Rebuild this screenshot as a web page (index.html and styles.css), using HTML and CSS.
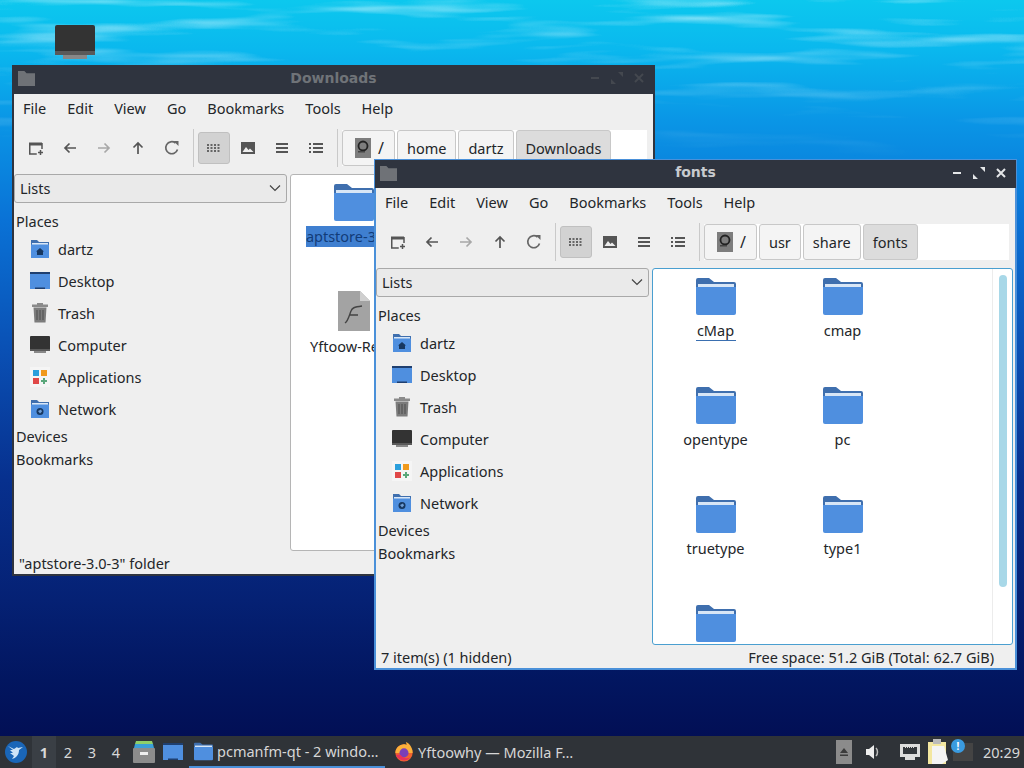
FILE: index.html
```html
<!DOCTYPE html>
<html lang="en">
<head>
    <meta charset="UTF-8">
    <title>pcmanfm-qt</title>
    <link rel="stylesheet" href="styles.css">
</head>
<body>
    <svg class="defs" width="0" height="0">
        <filter id="f-clouds" x="0" y="0" width="100%" height="100%">
            <feTurbulence type="fractalNoise" baseFrequency="0.005 0.06" numOctaves="3" seed="7"/>
            <feColorMatrix type="matrix" values="0 0 0 0 0.8  0 0 0 0 0.96  0 0 0 0 1  2.4 0 0 0 -1.25"/>
        </filter>
        <linearGradient id="g-fade" x1="0" y1="0" x2="0" y2="1">
            <stop offset="0" stop-color="#ccc"/>
            <stop offset="0.5" stop-color="#777"/>
            <stop offset="1" stop-color="#000"/>
        </linearGradient>
        <mask id="m-fade"><rect width="1024" height="160" fill="url(#g-fade)"/></mask>
        <symbol id="i-folder" viewBox="0 0 40 37">
            <path d="M2 0h11l5 4h20a2 2 0 0 1 2 2v8H0V2a2 2 0 0 1 2-2z" fill="#3f6fae"/>
            <rect x="2" y="6" width="36" height="6" fill="#d8e6f6"/>
            <path d="M0 9h40v26a2 2 0 0 1-2 2H2a2 2 0 0 1-2-2z" fill="#4f8fdf"/>
        </symbol>
        <symbol id="i-home" viewBox="0 0 20 20">
            <path d="M1 1h6l2 2h10v4H1z" fill="#3f6fae"/>
            <rect x="2" y="4" width="16" height="2" fill="#d8e6f6"/>
            <rect x="1" y="5.500" width="18" height="13.500" fill="#4f8fdf"/>
            <path d="M10 9l4 3.500h-1V16H7v-3.500H6z" fill="#17375f"/>
        </symbol>
        <symbol id="i-network" viewBox="0 0 20 20">
            <path d="M1 1h6l2 2h10v4H1z" fill="#3f6fae"/>
            <rect x="2" y="4" width="16" height="2" fill="#d8e6f6"/>
            <rect x="1" y="5.500" width="18" height="13.500" fill="#4f8fdf"/>
            <circle cx="10" cy="12.500" r="3.500" fill="#17375f"/>
            <path d="M8 12l3-1.500 1 2-2 2z" fill="#6f9ed6"/>
        </symbol>
        <symbol id="i-desktop" viewBox="0 0 20 20">
            <rect x="0" y="1" width="20" height="17" fill="#4f8fdf"/>
            <rect x="0" y="1" width="20" height="2" fill="#1f3f6f"/>
            <rect x="5" y="16.500" width="10" height="1.500" fill="#1f3f6f"/>
        </symbol>
        <symbol id="i-trash" viewBox="0 0 20 20">
            <path d="M7 0h6v1.500h5V4H2V1.500h5z" fill="#8a8a8a"/>
            <path d="M3.500 4.500h13l-1 15h-11z" fill="#7c7c7c"/>
            <path d="M7 7v10M10 7v10M13 7v10" stroke="#5c5c5c" stroke-width="1.500"/>
        </symbol>
        <symbol id="i-computer" viewBox="0 0 20 20">
            <rect x="0" y="1" width="20" height="15" rx="1" fill="#333"/>
            <rect x="0" y="14" width="20" height="2" fill="#5a5a5a"/>
            <rect x="4" y="16" width="12" height="2" fill="#888"/>
        </symbol>
        <symbol id="i-apps" viewBox="0 0 20 20">
            <rect x="0" y="0" width="20" height="20" fill="#f5f5f5"/>
            <rect x="3" y="3" width="6" height="6" fill="#2b9fdc"/>
            <rect x="11" y="3" width="6" height="6" fill="#f09a1d"/>
            <rect x="3" y="11" width="6" height="6" fill="#e04848"/>
            <path d="M14 11v6M11 14h6" stroke="#5aa77a" stroke-width="2"/>
        </symbol>
        <symbol id="i-newwin" viewBox="0 0 16 16">
            <path d="M1 2.500h13v3H1z" fill="#555"/>
            <path d="M1.750 3v11h7M14 3v6" fill="none" stroke="#555" stroke-width="1.500"/>
            <path d="M12.500 10v5M10 12.500h5" stroke="#555" stroke-width="1.500"/>
        </symbol>
        <symbol id="i-back" viewBox="0 0 16 16">
            <path d="M14 8H3M7.500 3.500L3 8l4.500 4.500" fill="none" stroke="currentColor" stroke-width="1.700"/>
        </symbol>
        <symbol id="i-up" viewBox="0 0 16 16">
            <path d="M8 14V3M3.500 7.500L8 3l4.500 4.500" fill="none" stroke="currentColor" stroke-width="1.700"/>
        </symbol>
        <symbol id="i-reload" viewBox="0 0 16 16">
            <path d="M13.500 9.500A6 6 0 1 1 11.500 3" fill="none" stroke="#666" stroke-width="1.700"/>
            <path d="M9.500 1h5v5z" fill="#666"/>
        </symbol>
        <symbol id="i-grid" viewBox="0 0 16 16">
            <path d="M1 4h2v2H1zM4.500 4h2v2h-2zM8 4h2v2H8zM11.500 4h2v2h-2zM1 7h2v2H1zM4.500 7h2v2h-2zM8 7h2v2H8zM11.500 7h2v2h-2zM1 10h2v2H1zM4.500 10h2v2h-2zM8 10h2v2H8zM11.500 10h2v2h-2z" fill="#666"/>
        </symbol>
        <symbol id="i-thumb" viewBox="0 0 16 16">
            <path d="M1 2h14v12H1z" fill="#555"/>
            <path d="M2.500 12l3.500-5 2.500 3 1.500-1.500 3.500 3.500z" fill="#eee"/>
        </symbol>
        <symbol id="i-compact" viewBox="0 0 16 16">
            <path d="M2 3h12v2H2zM2 7h12v2H2zM2 11h12v2H2z" fill="#555"/>
        </symbol>
        <symbol id="i-detail" viewBox="0 0 16 16">
            <path d="M1 3h2v2H1zM5 3h10v2H5zM1 7h2v2H1zM5 7h10v2H5zM1 11h2v2H1zM5 11h10v2H5z" fill="#555"/>
        </symbol>
        <symbol id="i-root" viewBox="0 0 16 20">
            <rect width="16" height="20" fill="#7d7d7d"/>
            <circle cx="8" cy="8" r="4.500" fill="none" stroke="#222" stroke-width="1.800"/>
            <rect x="3" y="13" width="7" height="1.500" fill="#444"/>
        </symbol>
        <symbol id="i-tfolder" viewBox="0 0 16 16">
            <path d="M0 1h6l2 2h8v12H0z" fill="#6f7277"/>
        </symbol>
    </svg>

    <div class="desktop">
        <svg class="clouds" width="1024" height="160"><g mask="url(#m-fade)"><rect width="1024" height="160" filter="url(#f-clouds)"/></g></svg>
        <svg class="desk-icon" width="40" height="40"><use href="#i-computer"/></svg>

        <section class="window window-back">
            <header class="titlebar">
                <svg class="title-icon" width="17" height="17"><use href="#i-tfolder"/></svg>
                <span class="title-text">Downloads</span>
                <div class="title-btns">
                    <svg width="14" height="14" viewBox="0 0 14 14"><path d="M3 7h8" stroke="currentColor" stroke-width="2"/></svg>
                    <svg width="14" height="14" viewBox="0 0 14 14"><path d="M8 1h5v5zM1 8l5 5H1z" fill="currentColor"/></svg>
                    <svg width="14" height="14" viewBox="0 0 14 14"><path d="M3 3l8 8M11 3l-8 8" stroke="currentColor" stroke-width="2"/></svg>
                </div>
            </header>
            <nav class="menubar">
                <span>File</span><span>Edit</span><span>View</span><span>Go</span><span>Bookmarks</span><span>Tools</span><span>Help</span>
            </nav>
            <div class="toolbar">
                <div class="tool"><svg width="16" height="16"><use href="#i-newwin"/></svg></div>
                <div class="tool"><svg width="16" height="16" class="ic-on"><use href="#i-back"/></svg></div>
                <div class="tool"><svg width="16" height="16" class="ic-off flip"><use href="#i-back"/></svg></div>
                <div class="tool"><svg width="16" height="16" class="ic-on"><use href="#i-up"/></svg></div>
                <div class="tool"><svg width="16" height="16"><use href="#i-reload"/></svg></div>
                <div class="tool-sep"></div>
                <div class="tool tool-active"><svg width="16" height="16"><use href="#i-grid"/></svg></div>
                <div class="tool"><svg width="16" height="16"><use href="#i-thumb"/></svg></div>
                <div class="tool"><svg width="16" height="16"><use href="#i-compact"/></svg></div>
                <div class="tool"><svg width="16" height="16"><use href="#i-detail"/></svg></div>
                <div class="tool-sep sep-path"></div>
                <div class="pathbar">
                    <div class="crumb crumb-root"><svg width="16" height="20"><use href="#i-root"/></svg><span>/</span></div>
                    <div class="crumb">home</div>
                    <div class="crumb">dartz</div>
                    <div class="crumb crumb-on">Downloads</div>
                </div>
            </div>
            <div class="main">
                <aside class="side">
                    <div class="combo"><span>Lists</span><svg width="12" height="8" viewBox="0 0 12 8"><path d="M1 1.500l5 5 5-5" fill="none" stroke="#444" stroke-width="1.200"/></svg></div>
                    <div class="side-head side-places">Places</div>
                    <div class="place"><svg width="20" height="20"><use href="#i-home"/></svg>dartz</div>
                    <div class="place"><svg width="20" height="20"><use href="#i-desktop"/></svg>Desktop</div>
                    <div class="place"><svg width="20" height="20"><use href="#i-trash"/></svg>Trash</div>
                    <div class="place"><svg width="20" height="20"><use href="#i-computer"/></svg>Computer</div>
                    <div class="place"><svg width="20" height="20"><use href="#i-apps"/></svg>Applications</div>
                    <div class="place"><svg width="20" height="20"><use href="#i-network"/></svg>Network</div>
                    <div class="side-head">Devices</div>
                    <div class="side-head">Bookmarks</div>
                </aside>
                <div class="view">
                    <div class="files">
                        <div class="file"><svg width="40" height="37"><use href="#i-folder"/></svg><span class="label label-sel">aptstore-3.0-3</span></div>
                        <div class="file"></div>
                        <div class="file">
                            <svg class="font-icon" width="32" height="40" viewBox="0 0 32 40">
                                <path d="M0 0h22l10 10v30H0z" fill="#a3a3a3"/>
                                <path d="M22 0l10 10H22z" fill="#cfcfcf"/>
                                <path d="M7 32c3-2 4-7 6-12 1-3 3-4 11-5M11 24h9" fill="none" stroke="#444" stroke-width="1.400"/>
                            </svg>
                            <span class="label">Yftoow-Regu</span>
                        </div>
                    </div>
                </div>
            </div>
            <footer class="status"><span>"aptstore-3.0-3" folder</span></footer>
        </section>

        <section class="window window-front">
            <header class="titlebar">
                <svg class="title-icon" width="17" height="17"><use href="#i-tfolder"/></svg>
                <span class="title-text">fonts</span>
                <div class="title-btns">
                    <svg width="14" height="14" viewBox="0 0 14 14"><path d="M3 7h8" stroke="currentColor" stroke-width="2"/></svg>
                    <svg width="14" height="14" viewBox="0 0 14 14"><path d="M8 1h5v5zM1 8l5 5H1z" fill="currentColor"/></svg>
                    <svg width="14" height="14" viewBox="0 0 14 14"><path d="M3 3l8 8M11 3l-8 8" stroke="currentColor" stroke-width="2"/></svg>
                </div>
            </header>
            <nav class="menubar">
                <span>File</span><span>Edit</span><span>View</span><span>Go</span><span>Bookmarks</span><span>Tools</span><span>Help</span>
            </nav>
            <div class="toolbar">
                <div class="tool"><svg width="16" height="16"><use href="#i-newwin"/></svg></div>
                <div class="tool"><svg width="16" height="16" class="ic-on"><use href="#i-back"/></svg></div>
                <div class="tool"><svg width="16" height="16" class="ic-off flip"><use href="#i-back"/></svg></div>
                <div class="tool"><svg width="16" height="16" class="ic-on"><use href="#i-up"/></svg></div>
                <div class="tool"><svg width="16" height="16"><use href="#i-reload"/></svg></div>
                <div class="tool-sep"></div>
                <div class="tool tool-active"><svg width="16" height="16"><use href="#i-grid"/></svg></div>
                <div class="tool"><svg width="16" height="16"><use href="#i-thumb"/></svg></div>
                <div class="tool"><svg width="16" height="16"><use href="#i-compact"/></svg></div>
                <div class="tool"><svg width="16" height="16"><use href="#i-detail"/></svg></div>
                <div class="tool-sep sep-path"></div>
                <div class="pathbar">
                    <div class="crumb crumb-root"><svg width="16" height="20"><use href="#i-root"/></svg><span>/</span></div>
                    <div class="crumb">usr</div>
                    <div class="crumb">share</div>
                    <div class="crumb crumb-on">fonts</div>
                </div>
            </div>
            <div class="main">
                <aside class="side">
                    <div class="combo"><span>Lists</span><svg width="12" height="8" viewBox="0 0 12 8"><path d="M1 1.500l5 5 5-5" fill="none" stroke="#444" stroke-width="1.200"/></svg></div>
                    <div class="side-head side-places">Places</div>
                    <div class="place"><svg width="20" height="20"><use href="#i-home"/></svg>dartz</div>
                    <div class="place"><svg width="20" height="20"><use href="#i-desktop"/></svg>Desktop</div>
                    <div class="place"><svg width="20" height="20"><use href="#i-trash"/></svg>Trash</div>
                    <div class="place"><svg width="20" height="20"><use href="#i-computer"/></svg>Computer</div>
                    <div class="place"><svg width="20" height="20"><use href="#i-apps"/></svg>Applications</div>
                    <div class="place"><svg width="20" height="20"><use href="#i-network"/></svg>Network</div>
                    <div class="side-head">Devices</div>
                    <div class="side-head">Bookmarks</div>
                </aside>
                <div class="view view-on">
                    <div class="files">
                        <div class="file"><svg width="40" height="37"><use href="#i-folder"/></svg><span class="label label-cur">cMap</span></div>
                        <div class="file"><svg width="40" height="37"><use href="#i-folder"/></svg><span class="label">cmap</span></div>
                        <div class="file"><svg width="40" height="37"><use href="#i-folder"/></svg><span class="label">opentype</span></div>
                        <div class="file"><svg width="40" height="37"><use href="#i-folder"/></svg><span class="label">pc</span></div>
                        <div class="file"><svg width="40" height="37"><use href="#i-folder"/></svg><span class="label">truetype</span></div>
                        <div class="file"><svg width="40" height="37"><use href="#i-folder"/></svg><span class="label">type1</span></div>
                        <div class="file"><svg width="40" height="37"><use href="#i-folder"/></svg></div>
                    </div>
                    <div class="scroll"><div class="scroll-thumb"></div></div>
                </div>
            </div>
            <footer class="status"><span>7 item(s) (1 hidden)</span><span>Free space: 51.2 GiB (Total: 62.7 GiB)</span></footer>
        </section>
    </div>

    <div class="panel">
        <svg class="start" width="32" height="32" viewBox="0 0 32 32">
            <circle cx="16" cy="16" r="11" fill="#1a66b8"/>
            <path d="M8 10l6 3 3-2 1 1 5-1-4 3c0 5-3 8-7 9l2-3-4-3 3 0-3-3 3 0z" fill="#cfe4f7"/>
        </svg>
        <div class="pager">
            <span class="desk-on">1</span><span>2</span><span>3</span><span>4</span>
        </div>
        <svg class="launch" width="22" height="24" viewBox="0 0 22 24">
            <path d="M3 1h16l1 3H2z" fill="#8fcf6a"/>
            <path d="M2 4h18l1 4H1z" fill="#3b9fd8"/>
            <rect x="0" y="8" width="22" height="15" rx="1" fill="#8c8c8c"/>
            <rect x="7" y="12" width="8" height="3" fill="#eee"/>
        </svg>
        <svg class="launch launch-desk" width="20" height="20"><use href="#i-desktop"/></svg>
        <div class="task task-on">
            <svg width="19" height="19"><use href="#i-folder"/></svg>
            <span>pcmanfm-qt - 2 windo…</span>
        </div>
        <div class="task task-fx">
            <svg width="20" height="22" viewBox="0 0 22 22">
                <circle cx="11" cy="12" r="9.500" fill="#f2622e"/>
                <path d="M1.500 12A9.500 9.500 0 0 1 14 3l-1-3c5 2 7.500 7 7.500 12z" fill="#fbb03b"/>
                <circle cx="11" cy="12" r="5" fill="#7a3fb8"/>
                <path d="M2 14c2 6 11 9 16 3-5 2-9 0-11-3z" fill="#e8325a"/>
            </svg>
            <span>Yftoowhy — Mozilla F…</span>
        </div>
        <div class="tray">
            <div class="tray-eject"><svg width="10" height="10" viewBox="0 0 10 10"><path d="M5 1l4 5H1zM1 7.500h8V9H1z" fill="#3c3c3c"/></svg></div>
            <svg class="tray-vol" width="18" height="18" viewBox="0 0 18 18"><path d="M2 6h3l5-4v14l-5-4H2z" fill="#eee"/><path d="M12 5c2 2 2 6 0 8" fill="none" stroke="#bbb" stroke-width="1.500"/></svg>
            <svg class="tray-net" width="22" height="20" viewBox="0 0 22 20"><path d="M1 2h20v13h-5v3H6v-3H1z" fill="#ddd"/><rect x="4" y="5" width="14" height="7" fill="#33373c"/><path d="M6 5.500h10" stroke="#ddd" stroke-dasharray="1 1"/></svg>
            <svg class="tray-clip" width="20" height="26" viewBox="0 0 20 26"><rect x="0" y="3" width="18" height="22" fill="#f3e7a0"/><path d="M4 7h12l4 14-6 4H4z" fill="#f4f4f4"/><rect x="5" y="0" width="8" height="5" fill="#bbb"/></svg>
            <div class="tray-note"><span class="note-dot">!</span></div>
            <span class="clock">20:29</span>
        </div>
    </div>
</body>
</html>
```

FILE: styles.css
```css
* {
    box-sizing: border-box;
}
html, body {
    margin: 0;
    height: 100%;
    overflow: hidden;
}
body {
    font-family: "Noto Sans", sans-serif;
    font-size: 14.5px;
    color: #232629;
    background: #021a66;
}
.defs {
    position: absolute;
}
svg {
    display: block;
    flex: none;
}

/* wallpaper */
.desktop {
    position: relative;
    height: 736px;
    background: linear-gradient(180deg, #0cc8ee 0, #0ab8ee 50px, #0a96e6 120px, #0a72d6 220px, #0a50b4 350px, #07308e 480px, #052174 600px, #021660 680px, #020f55 736px);
}
.clouds {
    position: absolute;
    left: 0;
    top: 0;
}
.desk-icon {
    position: absolute;
    left: 55px;
    top: 23px;
}

/* windows */
.window {
    position: absolute;
    width: 643px;
    height: 511px;
    display: flex;
    flex-direction: column;
    background: #efefef;
    border: 2px solid #2f343f;
    border-top: 0;
}
.window-back {
    left: 12px;
    top: 65px;
}
.window-front {
    left: 374px;
    top: 159px;
    border-color: #4a90d9;
}
.titlebar {
    height: 29px;
    margin: 0 -1px;
    padding-bottom: 3px;
    flex: none;
    position: relative;
    display: flex;
    align-items: center;
    justify-content: center;
    background: #2f343f;
    color: #6f7378;
    font-family: "DejaVu Sans", sans-serif;
    font-size: 14px;
    font-weight: 700;
}
.window-front .titlebar {
    padding-bottom: 4px;
    color: #c8cbcf;
    border-top: 1px solid #4a90d9;
}
.title-icon {
    position: absolute;
    left: 5px;
    top: 5px;
}
.title-btns {
    position: absolute;
    right: 8px;
    top: 6px;
    display: flex;
    gap: 8px;
    color: #44484f;
}
.window-front .title-btns {
    color: #e4e6e8;
}
.menubar {
    height: 30px;
    flex: none;
    display: flex;
    align-items: center;
    gap: 21px;
    padding: 0 0 3px 9px;
}
.toolbar {
    height: 48px;
    flex: none;
    display: flex;
    align-items: center;
    padding: 0 6px 0 5px;
}
.tool {
    width: 34px;
    height: 32px;
    flex: none;
    display: flex;
    align-items: center;
    justify-content: center;
}
.tool-active {
    width: 32px;
    margin: 0 1px;
    background: #d2d2d2;
    border: 1px solid #c0c0c0;
    border-radius: 3px;
}
.tool-sep {
    width: 1px;
    height: 38px;
    margin: 0 3px 0 4px;
    background: #c9c9c9;
}
.sep-path {
    margin: 0 4px;
}
.ic-on {
    color: #555;
}
.ic-off {
    color: #a8a8a8;
}
.flip {
    transform: scaleX(-1);
}
.pathbar {
    flex: 1;
    height: 36px;
    display: flex;
    gap: 2px;
    background: #fff;
}
.crumb {
    display: flex;
    align-items: center;
    gap: 7px;
    padding: 0 9px;
    background: #f4f4f4;
    border: 1px solid #c8c8c8;
    border-radius: 3px;
}
.crumb-root {
    padding: 0 10px 0 12px;
    font-size: 16px;
}
.crumb-on {
    background: #dcdcdc;
}
.main {
    flex: 1;
    min-height: 0;
    display: flex;
    gap: 3px;
}
.side {
    width: 274px;
    margin-left: -1px;
    flex: none;
    padding-top: 2px;
}
.combo {
    height: 29px;
    margin-left: 1px;
    display: flex;
    align-items: center;
    justify-content: space-between;
    padding: 0 5px 1px;
    background: #eaeaea;
    border: 1px solid #a9a9a9;
    border-radius: 3px;
}
.side-head {
    height: 23px;
    padding-left: 3px;
    line-height: 23px;
}
.side-places {
    margin-top: 7px;
}
.place {
    height: 32px;
    display: flex;
    align-items: center;
    gap: 8px;
    padding-left: 17px;
}
.view {
    flex: 1;
    min-width: 0;
    margin: 2px 2px 0 0;
    display: flex;
    position: relative;
    overflow: hidden;
    background: #fff;
    border: 1px solid #b5b5b5;
    border-radius: 3px;
}
.view-on {
    border-color: #4a9fd0;
}
.files {
    flex: 1;
    display: grid;
    grid-template-columns: repeat(2, 127px);
    grid-auto-rows: 109px;
    padding-top: 9px;
    margin-left: -1px;
}
.file {
    display: flex;
    flex-direction: column;
    align-items: center;
    gap: 3px;
}
.label {
    padding: 0 1px;
    line-height: 24px;
}
.label-sel {
    margin-top: 2px;
    padding: 0;
    line-height: 21px;
    background: #3f7fd0;
    color: #123c78;
}
.label-cur {
    width: 40px;
    padding: 2px 0 0;
    line-height: 20px;
    text-align: center;
    border-bottom: 1px solid #3a6fb0;
}
.font-icon {
    margin-top: -2px;
}
.scroll {
    width: 20px;
    flex: none;
    padding: 6px 6px 0;
    border-left: 1px solid #ececec;
}
.scroll-thumb {
    width: 8px;
    height: 312px;
    background: #a8d8e8;
    border-radius: 4px;
}
.status {
    height: 23px;
    flex: none;
    display: flex;
    align-items: center;
    justify-content: space-between;
    padding: 0 21px 0 5px;
}

/* bottom panel */
.panel {
    height: 32px;
    display: flex;
    align-items: center;
    background: #2f3338;
    color: #e2e2e2;
    position: relative;
}
.pager {
    display: flex;
    margin-right: 5px;
}
.pager span {
    width: 24px;
    height: 32px;
    line-height: 32px;
    text-align: center;
    color: #d8d8d8;
}
.pager .desk-on {
    font-weight: 700;
    background: #3a3f45;
}
.launch {
    margin-right: 8px;
}
.launch-desk {
    margin: 0 6px 0 0;
}
.task {
    width: 196px;
    height: 32px;
    flex: none;
    display: flex;
    align-items: center;
    gap: 4px;
    padding-left: 5px;
    color: #d6d6d6;
}
.task-on {
    border-bottom: 2px solid #4a90d9;
}
.task-fx {
    padding-left: 9px;
}
.tray {
    margin-left: auto;
    display: flex;
    align-items: center;
}
.tray-eject {
    width: 16px;
    height: 24px;
    display: flex;
    align-items: center;
    justify-content: center;
    background: #8b8b8b;
}
.tray-vol {
    margin-left: 12px;
}
.tray-net {
    margin-left: 17px;
}
.tray-clip {
    margin-left: 7px;
}
.tray-note {
    width: 20px;
    height: 18px;
    margin-left: 5px;
    background: #444;
    position: relative;
}
.note-dot {
    position: absolute;
    left: -2px;
    top: -4px;
    width: 14px;
    height: 14px;
    border-radius: 50%;
    background: #3a9be0;
    color: #fff;
    font-size: 10px;
    font-weight: 700;
    line-height: 14px;
    text-align: center;
}
.clock {
    margin: 0 4px 0 10px;
    color: #d8d8d8;
}
```
